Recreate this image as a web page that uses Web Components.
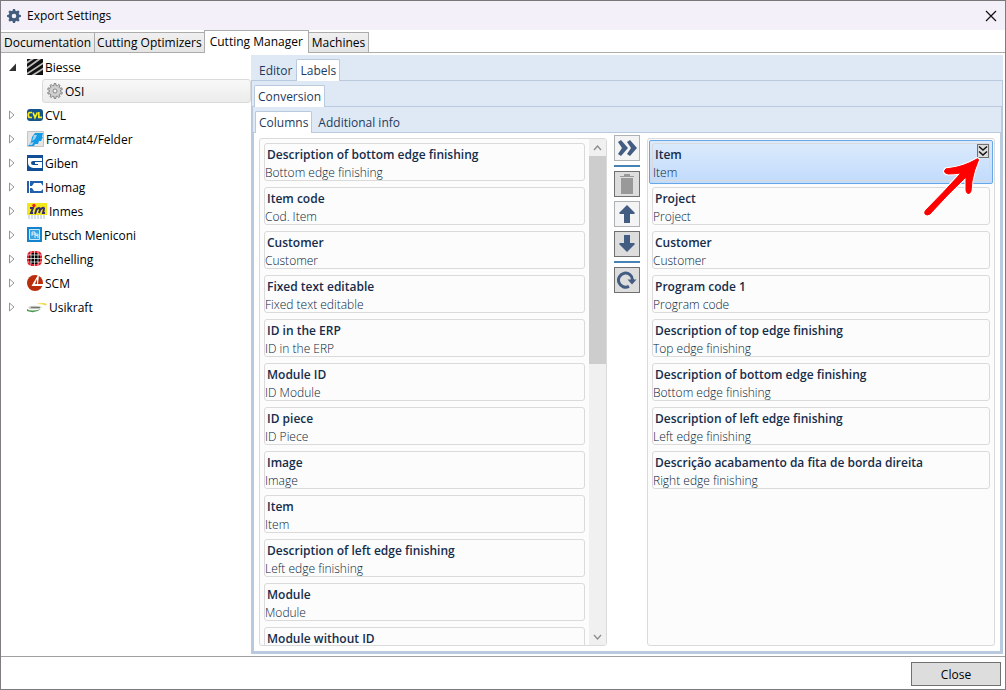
<!DOCTYPE html>
<html lang="en">
<head>
<meta charset="utf-8">
<title>Export Settings</title>
<style>
html, body { margin: 0; height: 100%; }
body { font: 12px/18px "Open Sans", "Noto Sans", sans-serif; color: #000; background: #fff; }
</style>
</head>
<body>
<export-window heading="Export Settings">
  <tab-panel variant="plain" tabs="Documentation|Cutting Optimizers|Cutting Manager|Machines" selected="2">
    <split-view>
      <machine-tree slot="side"></machine-tree>
      <tab-panel tabs="Editor|Labels" selected="1">
        <tab-panel tabs="Conversion" selected="0">
          <tab-panel tabs="Columns|Additional info" selected="0">
            <column-picker>
              <field-list slot="from" scroll>
                <field-card heading="Description of bottom edge finishing">Bottom edge finishing</field-card>
                <field-card heading="Item code">Cod. Item</field-card>
                <field-card heading="Customer">Customer</field-card>
                <field-card heading="Fixed text editable">Fixed text editable</field-card>
                <field-card heading="ID in the ERP">ID in the ERP</field-card>
                <field-card heading="Module ID">ID Module</field-card>
                <field-card heading="ID piece">ID Piece</field-card>
                <field-card heading="Image">Image</field-card>
                <field-card heading="Item">Item</field-card>
                <field-card heading="Description of left edge finishing">Left edge finishing</field-card>
                <field-card heading="Module">Module</field-card>
                <field-card heading="Module without ID"></field-card>
              </field-list>
              <field-list slot="to">
                <field-card heading="Item" selected>Item</field-card>
                <field-card heading="Project">Project</field-card>
                <field-card heading="Customer">Customer</field-card>
                <field-card heading="Program code 1">Program code</field-card>
                <field-card heading="Description of top edge finishing">Top edge finishing</field-card>
                <field-card heading="Description of bottom edge finishing">Bottom edge finishing</field-card>
                <field-card heading="Description of left edge finishing">Left edge finishing</field-card>
                <field-card heading="Descrição acabamento da fita de borda direita">Right edge finishing</field-card>
              </field-list>
            </column-picker>
          </tab-panel>
        </tab-panel>
      </tab-panel>
    </split-view>
  </tab-panel>
</export-window>

<script>
class Base extends HTMLElement {
  connectedCallback() {
    if (this.shadowRoot) return;
    this.attachShadow({ mode: "open" }).innerHTML =
      `<style>*{box-sizing:border-box}button{font:inherit;color:inherit;margin:0;padding:0;border:0;background:none}svg{display:block}${this.css()}</style>${this.html()}`;
  }
}
const gear = (teeth, r1, r2, r3) => {
  let d = "";
  for (let i = 0; i < teeth; i++) {
    const p = (r, o) => {
      const a = (i + o) / teeth * Math.PI * 2 - Math.PI / 2;
      return (8 + r * Math.cos(a)).toFixed(2) + " " + (8 + r * Math.sin(a)).toFixed(2);
    };
    d += `${i ? "L" : "M"}${p(r2, -.28)}L${p(r1, -.2)}L${p(r1, .2)}L${p(r2, .28)}`;
  }
  return d + `ZM${8 - r3} 8a${r3} ${r3} 0 1 0 ${2 * r3} 0a${r3} ${r3} 0 1 0 ${-2 * r3} 0Z`;
};

customElements.define("export-window", class extends Base {
  css() { return `
    :host{display:flex;flex-direction:column;height:100vh;box-sizing:border-box;border:1px solid #7f7b80;border-top-color:#777}
    header{display:flex;align-items:center;gap:6px;height:29px;padding:0 8px 0 6px;background:#f3f0f9;flex:none}
    h1{font:inherit;margin:0;flex:1}
    main{flex:1;min-height:0;display:flex;flex-direction:column}
    footer{flex:none;display:flex;justify-content:flex-end;padding:5px 4px 3px;border-top:1px solid #a0a0a0}
    .close{width:90px;height:24px;padding-top:2px;border:1px solid #707070;background:#ddd}`; }
  html() { return `
    <header><svg width="14" height="14" viewBox="0 0 16 16"><path fill="#435c7d" fill-rule="evenodd" d="${gear(8, 8, 6.3, 2.6)}"/></svg>
      <h1>${this.getAttribute("heading")}</h1>
      <button aria-label="Close window"><svg width="12" height="12" viewBox="0 0 12 12"><path d="M1 1l10 10M11 1L1 11" stroke="#111" stroke-width="1.2"/></svg></button></header>
    <main><slot></slot></main>
    <footer><button class="close">Close</button></footer>`; }
});

customElements.define("tab-panel", class extends Base {
  css() {
    const common = `:host{display:flex;flex-direction:column;flex:1;min-height:0;min-width:0}
      nav{display:flex;align-items:flex-end;flex:none}
      button{white-space:nowrap;flex:none}
      section{flex:1;min-height:0;display:flex;flex-direction:column}`;
    return this.getAttribute("variant") === "plain" ? common + `
      nav{height:23px;border-bottom:1px solid #acacac}
      button{height:20px;padding:0 2px;border:1px solid #acacac;border-bottom:0;background:linear-gradient(#f0f0f0,#e5e5e5);margin-left:-1px}
      button:first-child{margin-left:0;border-left:0;padding:0 3px}
      button[aria-selected=true]{height:23px;padding:0 5px 1px;background:#fff;margin-bottom:-1px;position:relative}
      button:last-child{padding:0 3px}
      section{padding:2px 2px 2px 0}` : common + `
      nav{height:26px;padding-left:2px;background:#dfe9f5;border:solid #b9c9de;border-width:0 0 1px}
      :host{color:#1e395b;background:#fff}
      button{height:22px;padding:2px 3px 0 5px;border:1px solid transparent;border-bottom:0;border-radius:2px 2px 0 0}
      button[aria-selected=true]{padding:1px 3px 0;background:#fff;border-color:#b9c9de;margin-bottom:-1px}
      section{border:solid #b9c9de;border-width:0 1px 1px}`;
  }
  html() {
    return `<nav role="tablist">${this.getAttribute("tabs").split("|").map((t, i) =>
      `<button role="tab" aria-selected="${i == this.getAttribute("selected")}">${t}</button>`).join("")}</nav>
      <section><slot></slot></section>`;
  }
});

customElements.define("split-view", class extends Base {
  css() { return `:host{display:grid;grid-template-columns:250px minmax(0,1fr);flex:1;min-height:0}
    div{display:flex;flex-direction:column;min-height:0;min-width:0}`; }
  html() { return `<div><slot name="side"></slot></div><div><slot></slot></div>`; }
});

const art = {
  Biesse: [16, `<path fill="#111" d="M0 0h16v16H0z"/><path d="M-2 5L7-1M-2 10.500L14-1M-2 16L18 3M3 18L18 8.500" stroke="#bdbdbd" stroke-width="1.800"/>`],
  CVL: [16, `<rect y="2" width="16" height="12" rx="3" fill="#15558c"/><path d="M5 5.500H3Q1.300 5.500 1.300 8T3 10.500H5M6 5.500L8 10.500L10.300 5.500M11.800 5V10.400H15" fill="none" stroke="#f4ed20" stroke-width="1.700"/>`],
  "Format4/Felder": [17, `<path fill="#e4e4e4" stroke="#c4c4c4" d="M.5.500h16v15H.500z"/><path fill="#139be8" d="M8 2h8l-1 4h1l-2 4h-2l-1 3H8l-1 2H1l3-4 1-5z"/><path fill="#a9d3ec" d="M7 4L5 10l3-2 2-4zM3 12l4-1-2 3H2z"/>`],
  Giben: [16, `<path fill="#104f98" d="M0 0h16v16H0z"/><path fill="#fff" d="M1 3h14v3H6q-2 0-2 2t2 2h5V9H8V7h7v6H6q-5-1-5-5z"/>`],
  Homag: [16, `<path fill="#2260ae" d="M0 2h16v12H0z"/><path fill="#fff" d="M2 2h1v5h2l2-3h7l2 3v3l-2 2H7L5 9H3v5H2z"/>`],
  Inmes: [20, `<path fill="#f5e51b" d="M0 0h20v12H0z"/><path d="M3 5h3L4 10h2M8 11l2-6M9 7q4-4 4 0l-1 3M13 7q4-4 4-1l-1 4h2" fill="none" stroke="#343070" stroke-width="2"/><circle cx="7" cy="2.500" r="1.700" fill="#ec2027"/><path d="M1 13h17M1 15h18" stroke="#a9bdd5" stroke-dasharray="2 1"/>`],
  "Putsch Meniconi": [15, `<path fill="#1583cc" d="M0 0h15v15H0z"/><path fill="#3ba3e2" stroke="#c9e9fa" d="M2.500 2.500h10v10h-10z"/><path d="M5 9V5h3v2H5M8 11V7h3v4M8 8l3 1" fill="none" stroke="#fff" stroke-width=".8"/>`],
  Schelling: [15, `<rect width="15" height="15" rx="5" fill="#e0202b"/><path fill="#000" d="M4 2h7v2h2v7h-2v2H5v2H4v-3H2V4h2z"/><path d="M4 0v15M7.500 0v15M11 0v15M0 4h15M0 7.500h15M0 11h15" stroke="#fff" stroke-width=".7"/>`],
  SCM: [16, `<circle cx="8" cy="8" r="8" fill="#b92c0c"/><path fill="#fff" d="M11 0L4.500 11H16V9h-5l1-9z"/><path fill="#b92c0c" d="M10 4v5H8z"/>`],
  Usikraft: [20, `<path d="M0 10q4 3 14 0-6 5-14 2z" fill="#4a9b50"/><path d="M1 8q5-2 10-1l4 1-3 2H3z" fill="#c9cbc5"/><path d="M9 5q8-2 11 0l-2 2q1-2-9-2" fill="#f2d944"/><path d="M4 8.500h9" stroke="#555" stroke-width="1.200" opacity=".7"/>`]
};
customElements.define("machine-tree", class extends Base {
  css() { return `:host{display:block}
    ul{list-style:none;margin:0;padding:0}
    .row{display:flex;align-items:center;height:24px;padding-left:7px;gap:2px}
    .toggle{width:9px;margin-right:8px;height:16px;display:grid;place-items:center start}
    .child{margin-left:41px;padding-left:4px;gap:2px;border:1px solid #dadada;border-radius:3px;background:linear-gradient(#f8f8f8,#ececec)}
    span{padding-top:2px}
    svg{flex:none}`; }
  html() {
    return `<ul role="tree">${Object.entries(art).map(([name, [w, body]], i) => `<li role="treeitem"><div class="row">
      <button class="toggle" aria-label="${i ? "Expand" : "Collapse"} ${name}"><svg width="9" height="10" viewBox="0 0 9 10">${i
        ? `<path d="M1.500 1v8L6 5z" fill="#fff" stroke="#969696"/>` : `<path d="M8 1.500V9H1z" fill="#303030"/>`}</svg></button>
      <svg width="${w}" height="16" viewBox="0 0 ${w} 16">${body}</svg><span>${name}</span></div>${i ? "" :
      `<div class="row child"><svg width="16" height="16" viewBox="0 0 16 16"><path fill="#d0d0d0" stroke="#7d7d7d" stroke-width=".9" fill-rule="evenodd" d="${gear(10, 7.5, 5.6, 2)}"/></svg><span>OSI</span></div>`}</li>`).join("")}</ul>`;
  }
});

customElements.define("column-picker", class extends Base {
  css() { return `:host{flex:1;min-height:0;display:grid;grid-template-columns:minmax(0,1fr) 40px minmax(0,1fr);grid-template-rows:minmax(0,1fr);padding:0 5px 5px}
    .side{display:flex;min-height:0;padding-top:5px}
    .tools{display:flex;flex-direction:column;align-items:center;gap:4px;padding:2px 1px 0 0}
    .tools button{width:26px;height:26px;display:grid;place-items:center;border:1px solid #707070;background:#ddd}
    .tools button.lit{border-color:#adb2b5;background:#f4f4f4}
    hr{width:26px;height:2px;margin:0;border:0;background:#4682b4}
    path{fill:#435c82}`; }
  html() { return `<div class="side"><slot name="from"></slot></div>
    <div class="tools">
      <button class="lit" aria-label="Add"><svg width="20" height="18" viewBox="0 0 20 18"><path d="M1 3l3-2 7 8-7 8-3-2 4-6zM10 3l3-2 7 8-7 8-3-2 4-6z"/></svg></button>
      <hr>
      <button aria-label="Delete"><svg width="14" height="20" viewBox="0 0 14 20"><path style="fill:#999" d="M0 2h4V0h6v2h4v1H0zM1 4h12v16H1z"/></svg></button>
      <button class="lit" aria-label="Move up"><svg width="16" height="18" viewBox="0 0 16 18"><path d="M8 0l8 8-1 1h-4v9H5V9H1L0 8z"/></svg></button>
      <button aria-label="Move down"><svg width="16" height="18" viewBox="0 0 16 18"><path d="M8 17l8-8-1-1h-4V0H5v8H1L0 9z"/></svg></button>
      <hr>
      <button aria-label="Reload"><svg width="20" height="18" viewBox="0 0 20 18"><path style="fill:none;stroke:#435c82;stroke-width:3" d="M12 15.200A7 7 0 1 1 15.500 9"/><path d="M10.500 8.500h9L15 13.500z"/></svg></button>
    </div>
    <div class="side"><slot name="to"></slot></div>`; }
});

customElements.define("field-list", class extends Base {
  css() { return `:host{flex:1;min-width:0;min-height:0;display:flex;border:1px solid #dadada;border-radius:3px;background:#fcfcfc}
    .items{flex:1;min-width:0;overflow:hidden;padding:1px}
    .bar{width:17px;display:flex;flex-direction:column;background:#f0f0f0;flex:none}
    .bar button{height:17px;display:grid;place-items:center;flex:none}
    .track{flex:1}.thumb{height:44%;background:#cdcdcd}
    path{fill:none;stroke:#8c8c8c;stroke-width:1.300}`; }
  html() { return `<div class="items" role="listbox"><slot></slot></div>${this.hasAttribute("scroll") ? `<div class="bar">
    <button aria-label="Scroll up"><svg width="9" height="6" viewBox="0 0 9 6"><path d="M1 5l3.500-4L8 5"/></svg></button>
    <div class="track"><div class="thumb"></div></div>
    <button aria-label="Scroll down"><svg width="9" height="6" viewBox="0 0 9 6"><path d="M1 1l3.500 4L8 1"/></svg></button></div>` : ""}`; }
});

customElements.define("field-card", class extends Base {
  css() { return `:host{display:block;padding:3px;height:44px;box-sizing:border-box;position:relative}
    :host([selected]){padding:2px;border:1px solid #66a7e8;border-radius:2px;background:linear-gradient(#dcebfc,#c1dbfc)}
    article{height:38px;border:1px solid #dadada;border-radius:3px;padding-top:2px}
    h2{font-size:12px;line-height:18px;font-weight:600;margin:0;padding-left:2px;color:#152c4b}
    p{margin:0;font-weight:300;line-height:18px;color:#061c3a}
    .more{position:absolute;right:3px;top:3px;width:12px;height:14px;display:grid;place-items:center;border:1px solid #707070;background:#ddd}
    .arrow{position:absolute;right:9px;top:15px;z-index:1;pointer-events:none}
    .arrow path{stroke-linejoin:round}
    .halo{fill:#fff;stroke:#fff;stroke-width:3}.ink{fill:#f00;stroke:#f00;stroke-width:1}`; }
  html() {
    const arrow = "M54 3Q55 2 55.500 4Q51 14 49 25L48 35Q47 38 45 37.500Q43 37 43 34V21Q24 39 7 58Q4 60 2 58Q1 56 3 54Q20 37 38 17Q31 18 25 18Q21 17 21.500 15Q22 12 26 12.500Q40 11 54 3Z";
    return `<article><h2>${this.getAttribute("heading")}</h2><p><slot></slot></p></article>${this.hasAttribute("selected") ? `
    <button class="more" aria-label="More"><svg width="10" height="12" viewBox="0 0 10 12"><path d="M1 1.500l4 3.500 4-3.500M1 6.500L5 10l4-3.500" fill="none" stroke="#111" stroke-width="1.500"/></svg></button>
    <svg class="arrow" width="60" height="62" viewBox="0 0 60 62"><path class="halo" d="${arrow}"/><path class="ink" d="${arrow}"/></svg>` : ""}`;
  }
});
</script>
</body>
</html>
